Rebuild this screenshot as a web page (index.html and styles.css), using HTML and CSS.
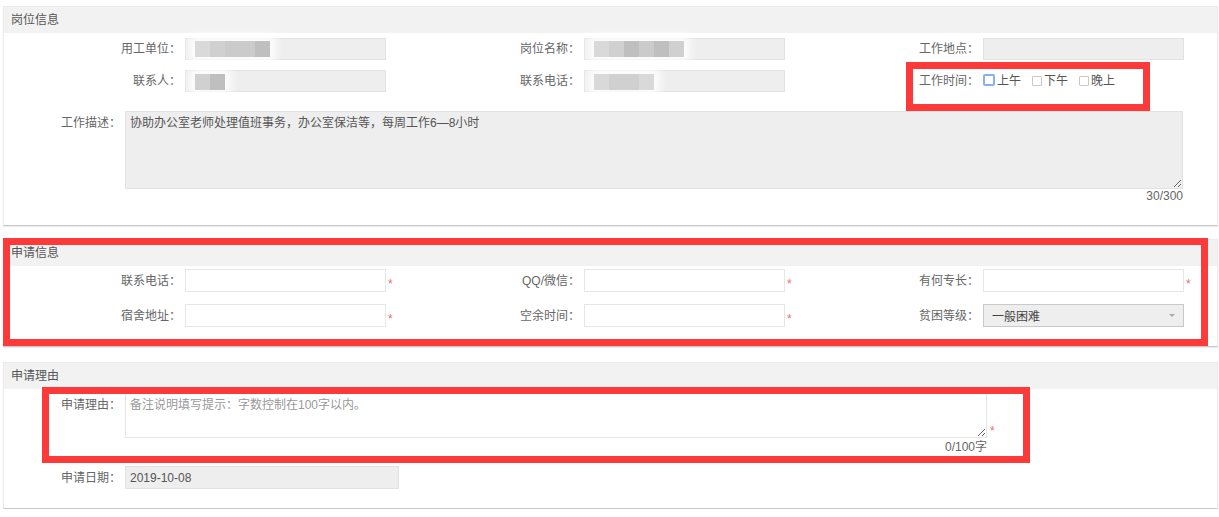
FILE: index.html
```html
<!DOCTYPE html>
<html lang="zh-CN">
<head>
    <meta charset="UTF-8">
    <meta name="viewport" content="width=device-width, initial-scale=1.0">
    <title>岗位申请</title>
    <link rel="stylesheet" href="styles.css">
</head>
<body>
    <div class="page">
        <!-- 岗位信息 -->
        <div class="panel panel-post">
            <div class="panel-head">岗位信息</div>
            <div class="panel-body">
                <div class="grid grid-post">
                    <div class="item">
                        <label>用工单位：</label>
                        <div class="field disabled">
                            <span class="mosaic"><i class="m1 w15"></i><i class="m2 w15"></i><i class="m3 w30"></i><i class="m4 w15"></i></span>
                        </div>
                    </div>
                    <div class="item">
                        <label>岗位名称：</label>
                        <div class="field disabled">
                            <span class="mosaic"><i class="m1 w15"></i><i class="m2 w15"></i><i class="m4 w15"></i><i class="m3 w15"></i><i class="m4 w15"></i><i class="m2 w15"></i></span>
                        </div>
                    </div>
                    <div class="item">
                        <label>工作地点：</label>
                        <div class="field disabled"></div>
                    </div>
                    <div class="item">
                        <label>联系人：</label>
                        <div class="field disabled">
                            <span class="mosaic low"><i class="m2 w15"></i><i class="m4 w15"></i></span>
                        </div>
                    </div>
                    <div class="item">
                        <label>联系电话：</label>
                        <div class="field disabled">
                            <span class="mosaic low"><i class="m1 w15"></i><i class="m2 w30"></i><i class="m1 w15"></i></span>
                        </div>
                    </div>
                    <div class="item">
                        <label>工作时间：</label>
                        <div class="checks">
                            <span class="check"><i class="box focus"></i>上午</span>
                            <span class="check"><i class="box"></i>下午</span>
                            <span class="check"><i class="box"></i>晚上</span>
                        </div>
                    </div>
                </div>
                <div class="area-row">
                    <label>工作描述：</label>
                    <div class="area-wrap">
                        <textarea class="area area-desc disabled" readonly>协助办公室老师处理值班事务，办公室保洁等，每周工作6—8小时</textarea>
                        <div class="count">30/300</div>
                    </div>
                </div>
            </div>
        </div>

        <!-- 申请信息 -->
        <div class="panel panel-apply">
            <div class="panel-head">申请信息</div>
            <div class="panel-body">
                <div class="grid grid-apply">
                    <div class="item">
                        <label>联系电话：</label>
                        <input class="field" type="text">
                        <span class="star">*</span>
                    </div>
                    <div class="item">
                        <label>QQ/微信：</label>
                        <input class="field" type="text">
                        <span class="star">*</span>
                    </div>
                    <div class="item">
                        <label>有何专长：</label>
                        <input class="field" type="text">
                        <span class="star">*</span>
                    </div>
                    <div class="item">
                        <label>宿舍地址：</label>
                        <input class="field" type="text">
                        <span class="star">*</span>
                    </div>
                    <div class="item">
                        <label>空余时间：</label>
                        <input class="field" type="text">
                        <span class="star">*</span>
                    </div>
                    <div class="item">
                        <label>贫困等级：</label>
                        <div class="field select">一般困难<span class="caret"></span></div>
                    </div>
                </div>
            </div>
        </div>

        <!-- 申请理由 -->
        <div class="panel panel-reason">
            <div class="panel-head">申请理由</div>
            <div class="panel-body">
                <div class="area-row">
                    <label>申请理由：</label>
                    <div class="area-wrap">
                        <textarea class="area area-reason" placeholder="备注说明填写提示：字数控制在100字以内。"></textarea>
                        <div class="count">0/100字</div>
                    </div>
                    <span class="star star-area">*</span>
                </div>
                <div class="date-row">
                    <label>申请日期：</label>
                    <div class="field disabled date">2019-10-08</div>
                </div>
            </div>
        </div>

        <!-- 标注框 -->
        <div class="mark mark-time"></div>
        <div class="mark mark-apply"></div>
        <div class="mark mark-reason"></div>
    </div>
</body>
</html>
```

FILE: styles.css
```css
body {
    margin: 0;
    background: #fff;
    font-family: "Liberation Sans", "Noto Sans CJK SC", sans-serif;
    font-size: 12px;
    color: #555;
}
.page {
    position: relative;
    padding: 6px 1px 0 3px;
}
.panel {
    background: #fff;
    border: 1px solid #ebebeb;
    border-bottom-color: #c9c9c9;
    box-shadow: 0 1px 1px rgba(0, 0, 0, 0.08);
}
.panel-apply {
    margin-top: 13px;
}
.panel-reason {
    margin-top: 15px;
}
.panel-head {
    height: 26px;
    line-height: 26px;
    padding-left: 7px;
    background: #f2f2f2;
    color: #555;
}
.panel-post .panel-body {
    padding: 5px 0 22px;
}
.panel-apply .panel-body {
    padding: 3px 0 19px;
}
.panel-reason .panel-body {
    padding: 4px 0 19px;
}
.grid {
    display: grid;
    grid-template-columns: repeat(3, 399px);
}
.grid-post {
    row-gap: 10px;
}
.grid-apply {
    row-gap: 12px;
}
.item {
    display: flex;
    align-items: center;
}
/* TC 字体的全角冒号居中，更接近原图 */
label {
    flex: none;
    width: 181px;
    padding-right: 4px;
    box-sizing: border-box;
    text-align: right;
    font-family: "Liberation Sans", "Noto Sans CJK TC", sans-serif;
    color: #666;
    line-height: 14px;
}
.field {
    flex: none;
    display: flex;
    align-items: center;
    width: 201px;
    height: 23px;
    margin: 0;
    padding: 0 8px;
    box-sizing: border-box;
    border: 1px solid #e6e6e6;
    background: #fff;
    font: inherit;
    color: #555;
    outline: none;
}
.grid-post .field {
    height: 22px;
}
.disabled {
    background: #eee;
    border-color: #e2e2e2;
}
.star {
    margin: 6px 0 0 2px;
    line-height: 12px;
    color: #f06b6b;
}

/* 模糊处理的内容 */
.mosaic {
    display: flex;
    height: 16px;
    margin-left: 1px;
    filter: blur(0.5px);
    box-shadow: 0 0 8px 6px rgba(255, 255, 255, 0.85);
    background: rgba(255, 255, 255, 0.6);
}
.mosaic.low {
    height: 16px;
    margin-top: 2px;
}
.mosaic i {
    display: block;
    height: 100%;
}
.w15 { width: 15px; }
.w30 { width: 30px; }
.m1 { background: #d9d9d9; }
.m2 { background: #d0d0d0; }
.m3 { background: #cbcbcb; }
.m4 { background: #bfbfbf; }

/* 工作时间 */
.checks {
    display: flex;
    align-items: center;
    gap: 11px;
    color: #555;
}
.check {
    display: flex;
    align-items: center;
    gap: 2px;
    line-height: 14px;
}
.box {
    display: block;
    width: 10px;
    height: 10px;
    box-sizing: border-box;
    border: 1px solid #c8c8c8;
    border-radius: 1px;
    background: #fff;
}
.box.focus {
    width: 12px;
    height: 12px;
    border: 2px solid #8ab0f0;
    border-radius: 2px;
    margin-top: -2px;
}

/* 文本域 */
.area-row {
    display: flex;
    align-items: flex-start;
}
.area-row label {
    width: 121px;
    padding-top: 5px;
}
.panel-post .area-row {
    margin-top: 19px;
}
.area {
    display: block;
    box-sizing: border-box;
    margin: 0;
    padding: 4px 4px;
    border: 1px solid #e6e6e6;
    background: #fff;
    font: inherit;
    line-height: 14px;
    color: #555;
    outline: none;
}
.area.disabled {
    background: #eee;
    border-color: #e2e2e2;
}
.area-desc {
    width: 1058px;
    height: 78px;
}
.area-reason {
    width: 862px;
    height: 45px;
}
.area::placeholder {
    color: #999;
}
.count {
    text-align: right;
    line-height: 14px;
    color: #666;
}
.panel-reason .count {
    margin-top: 2px;
}
.star-area {
    align-self: flex-start;
    margin: 32px 0 0 3px;
}
.date-row {
    display: flex;
    align-items: center;
    margin-top: 12px;
}
.date-row label {
    width: 121px;
}
.date {
    width: 274px;
    padding-left: 4px;
}

/* 下拉框 */
.select {
    position: relative;
    background: #eee;
    border-color: #c9c9c9;
    color: #444;
}
.caret {
    position: absolute;
    right: 8px;
    top: 9px;
    border-left: 3px solid transparent;
    border-right: 3px solid transparent;
    border-top: 3px solid #aaa;
}

/* 红色标注框 */
.mark {
    position: absolute;
    border: 7px solid #fd3a3a;
    box-sizing: border-box;
}
.mark-time {
    left: 906px;
    top: 62px;
    width: 244px;
    height: 49px;
}
.mark-apply {
    left: 3px;
    top: 238px;
    width: 1205px;
    height: 108px;
}
.mark-reason {
    left: 42px;
    top: 387px;
    width: 988px;
    height: 76px;
}
```
